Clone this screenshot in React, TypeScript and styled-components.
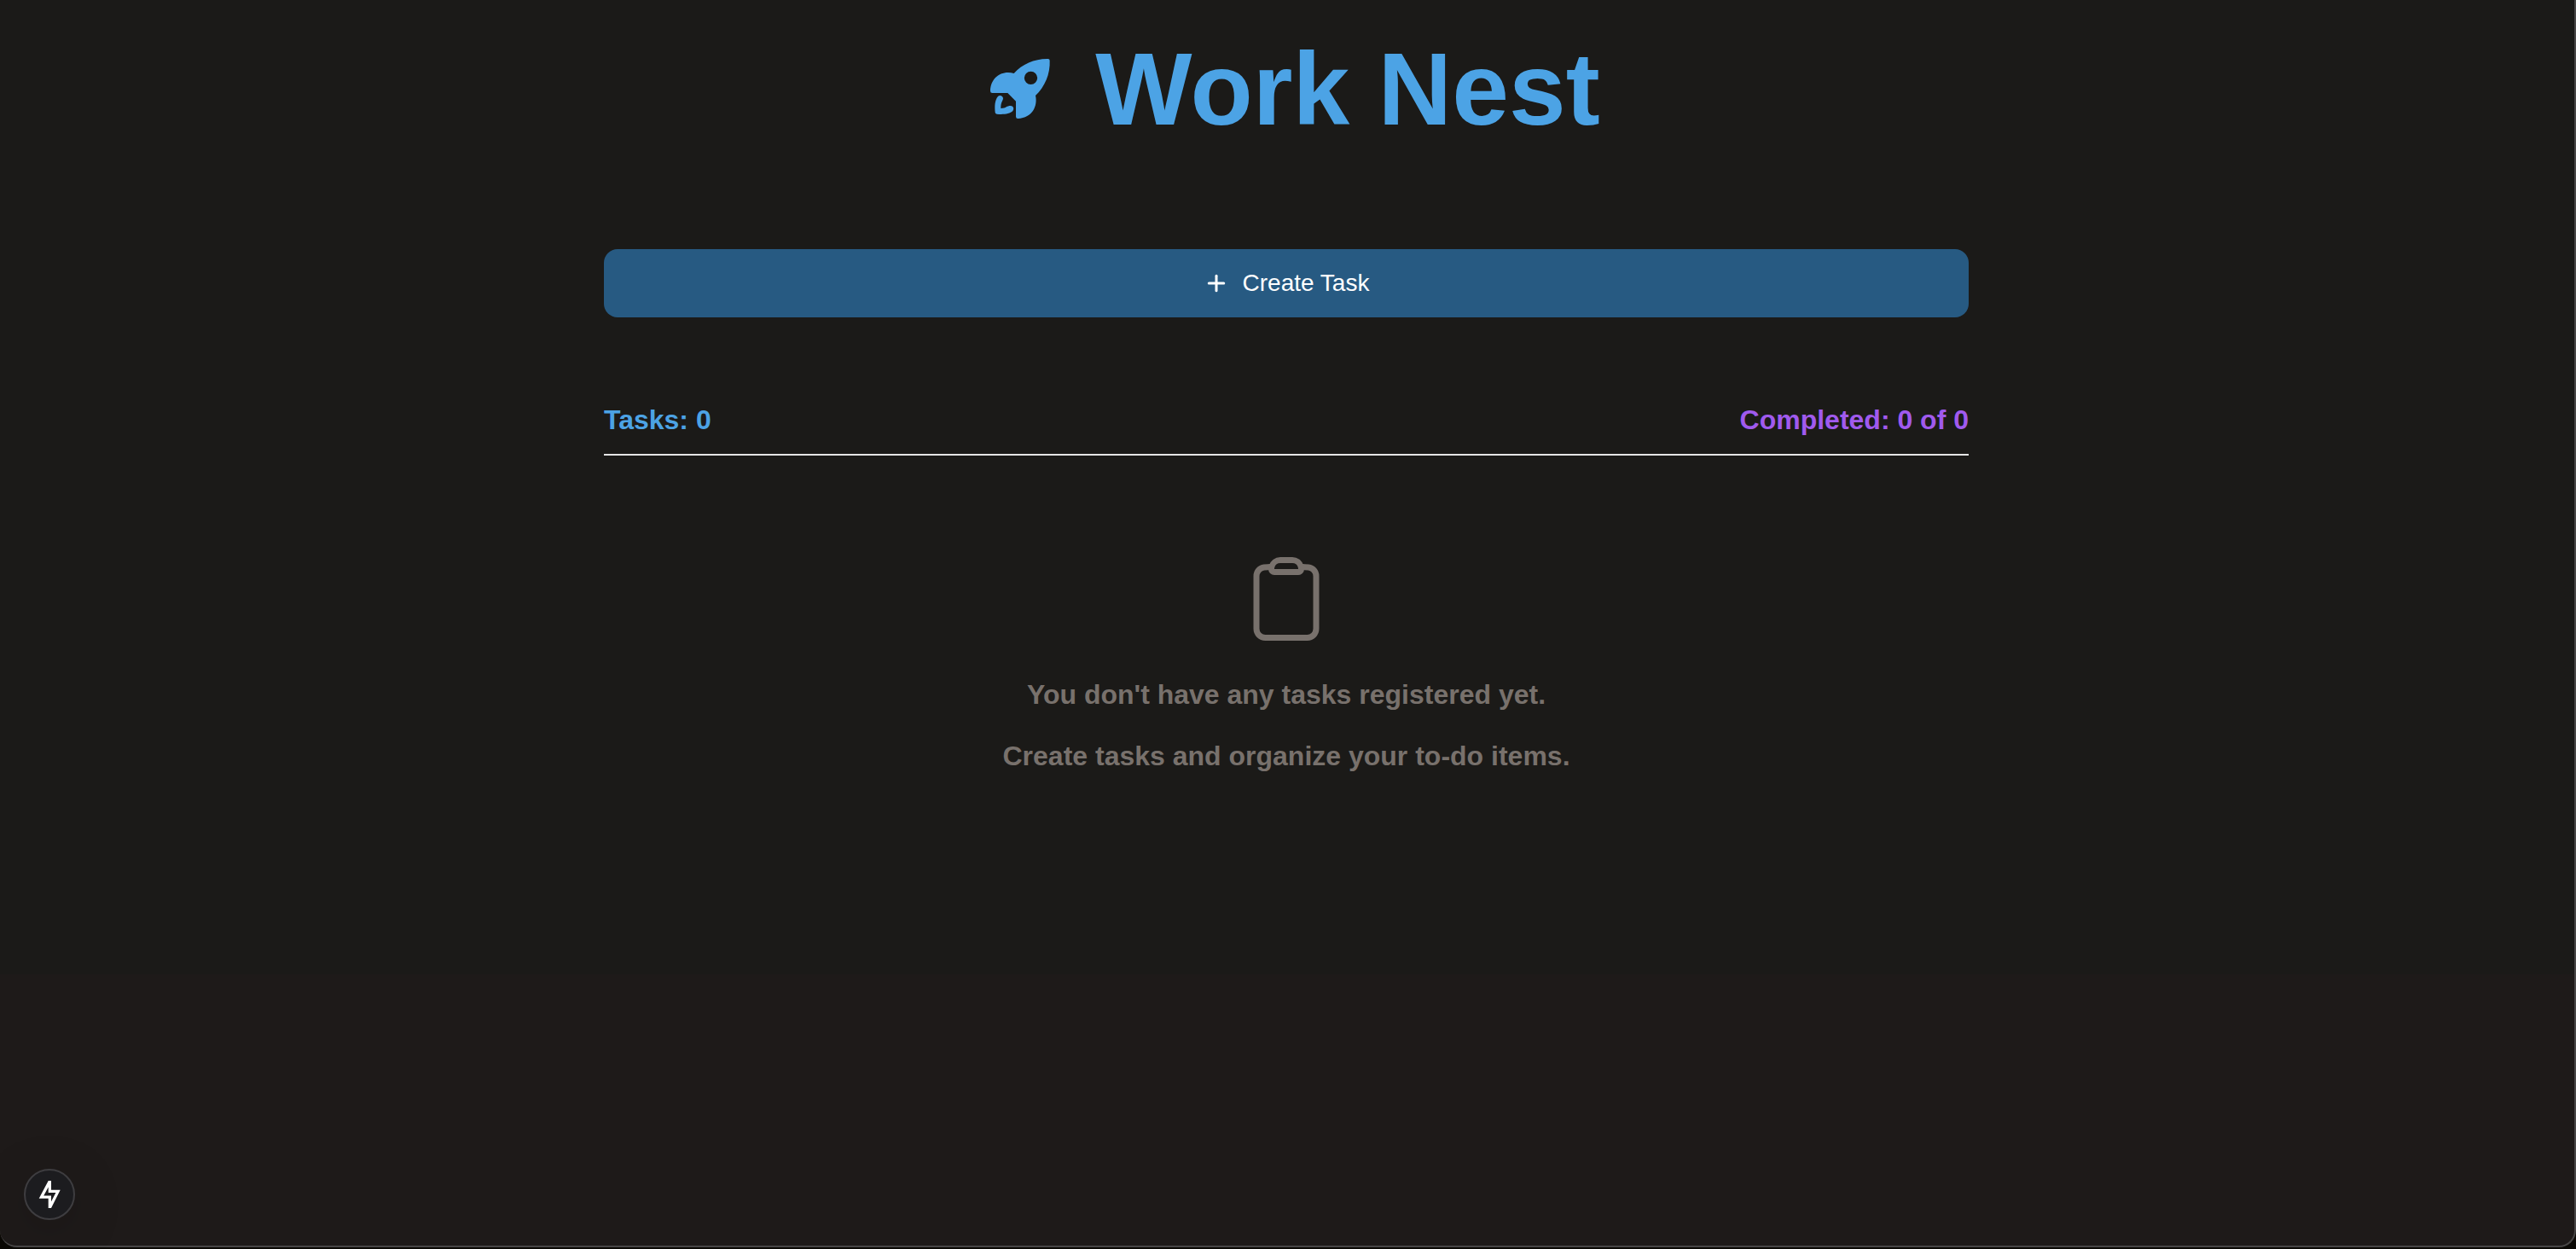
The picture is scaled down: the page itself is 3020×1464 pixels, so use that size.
import React from "react";
import styled, { createGlobalStyle } from "styled-components";
import { FiPlus } from "react-icons/fi";
import { HiOutlineClipboard } from "react-icons/hi2";

const GlobalStyle = createGlobalStyle`
  *, *::before, *::after { box-sizing: border-box; }
  body {
    margin: 0;
    background: #0b0905;
    font-family: "Liberation Sans", Arial, Helvetica, sans-serif;
  }
  h1, p { margin: 0; }
`;

const Window = styled.div`
  min-height: calc(100vh - 2px);
  padding-right: 2px;
  border: solid #484646;
  border-width: 0 2px 2px 0;
  border-radius: 0 0 20px 20px;
  background: linear-gradient(#1b1a18 1142px, #1e1a19 1142px);
`;

const Header = styled.header`
  display: flex;
  justify-content: center;
  align-items: center;
  gap: 48px;
  padding: 44px 0 0 16px;
  color: #4ca3e5;
`;

const Title = styled.h1`
  font-size: 120px;
  line-height: 120px;
  font-weight: 700;
`;

const Main = styled.main`
  display: flex;
  flex-direction: column;
  width: 100%;
  max-width: 1600px;
  margin: 128px auto 0;
`;

const CreateButton = styled.button`
  display: flex;
  justify-content: center;
  align-items: center;
  gap: 16px;
  height: 80px;
  border: 0;
  border-radius: 16px;
  background: #275a82;
  color: #fff;
  font: 28px/40px "Liberation Sans", Arial, sans-serif;
  cursor: pointer;
`;

const Stats = styled.div`
  display: flex;
  justify-content: space-between;
  margin-top: 96px;
  padding-bottom: 16px;
  border-bottom: 2px solid #e5e5e5;
`;

const Stat = styled.p<{ $color: string }>`
  color: ${({ $color }) => $color};
  font-size: 32px;
  line-height: 48px;
  font-weight: 700;
`;

const Empty = styled.section`
  display: flex;
  flex-direction: column;
  align-items: center;
  gap: 32px;
  padding-top: 112px;
  color: #78716c;
`;

const Messages = styled.div`
  display: flex;
  flex-direction: column;
  gap: 24px;
`;

const Message = styled.p`
  font-size: 32px;
  line-height: 48px;
  font-weight: 700;
  text-align: center;
`;

const DevButton = styled.button`
  position: fixed;
  left: 28px;
  bottom: 34px;
  display: flex;
  justify-content: center;
  align-items: center;
  width: 60px;
  height: 60px;
  padding: 0;
  border: 2px solid #3e3d40;
  border-radius: 50%;
  background: #1c1c1f;
  box-shadow: 0 12px 64px rgba(0, 0, 0, 0.16);
  cursor: pointer;
`;

function Rocket() {
  return (
    <svg width="80" height="80" viewBox="48 42 240 240" fill="currentColor" fillRule="evenodd" aria-hidden="true">
      <path d="M266 57Q272 57 272 63C274 110 255 155 222 186C230 222 212 264 160 267Q153 267 153 260V206L124 177H70Q63 177 63 170C64 125 100 96 146 108C175 75 220 56 266 57ZM205.5 101A23 23 0 1 0 205.5 147A23 23 0 1 0 205.5 101Z" />
      <path d="M90 189C96 182 108 187 108 196C108 205 99 209 100 231C120 230 121 222 134 222C144 222 148 233 142 240C132 251 108 253 86 251Q80 250 80 245C78 225 78 203 90 189Z" />
    </svg>
  );
}

function Bolt() {
  return (
    <svg width="28" height="36" viewBox="0 0 28 36" fill="#fff" fillRule="evenodd" aria-hidden="true">
      <path d="M12.7 2H16V12.7H26.7L16 34H12.7V22.7H1.7ZM12.7 9.5L7.2 19.4H16V26.6L21.4 16H12.7Z" />
    </svg>
  );
}

export default function App() {
  return (
    <>
      <GlobalStyle />
      <Window>
        <Header>
          <Rocket />
          <Title>Work Nest</Title>
        </Header>
        <Main>
          <CreateButton type="button">
            <FiPlus size={30} strokeWidth={2.4} aria-hidden="true" />
            Create Task
          </CreateButton>
          <Stats>
            <Stat $color="#4ca3e5">Tasks: 0</Stat>
            <Stat $color="#a05aee">Completed: 0 of 0</Stat>
          </Stats>
          <Empty>
            <HiOutlineClipboard size={112} aria-hidden="true" />
            <Messages>
              <Message>You don't have any tasks registered yet.</Message>
              <Message>Create tasks and organize your to-do items.</Message>
            </Messages>
          </Empty>
        </Main>
      </Window>
      <DevButton type="button" aria-label="Development tools">
        <Bolt />
      </DevButton>
    </>
  );
}
